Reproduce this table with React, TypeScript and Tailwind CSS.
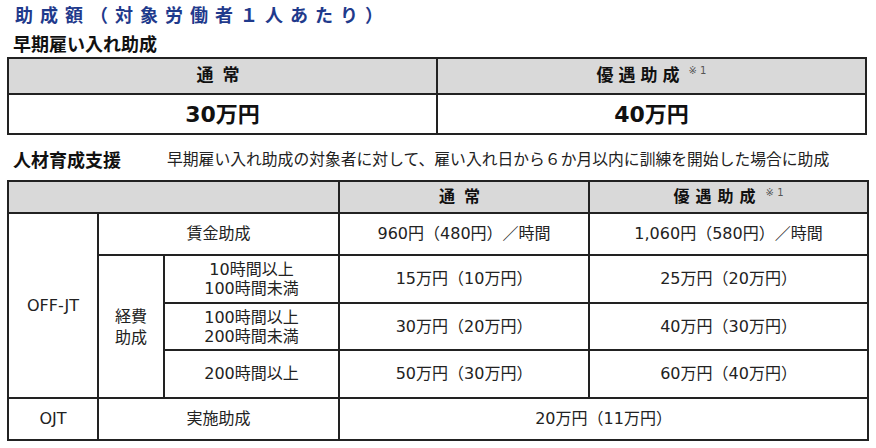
const font = { fontFamily: '"DejaVu Sans", "Noto Sans CJK JP", "Noto Sans", sans-serif' };
const cjk = { fontFamily: '"Noto Sans CJK JP", "Noto Sans", sans-serif' };

function Note() {
  return (
    <span className="ml-1 align-top text-[10px] font-normal tracking-normal text-[#555]">
      ※ 1
    </span>
  );
}

const cell = "border-2 border-[#222] text-center align-middle p-0";

export default function App() {
  return (
    <div
      className="w-[876px] h-[448px] bg-white text-[#111] px-[7px] overflow-hidden"
      style={font}
    >
      {/* title */}
      <div className="h-[28px] flex items-center pl-[8px]" style={cjk}>
        <h1 className="text-[18px] font-bold tracking-[7px] text-[#1f3a8c] leading-none">
          助成額（対象労働者１人あたり）
        </h1>
      </div>
      <div className="h-[29px] flex items-center pl-[6px]" style={cjk}>
        <h2 className="text-[18px] font-bold leading-none">早期雇い入れ助成</h2>
      </div>

      {/* early hire table */}
      <table className="w-[860px] table-fixed border-collapse">
        <tbody>
          <tr className="h-[36px] bg-[#d9d9d9]">
            <td className={`${cell} text-[17px] font-bold tracking-[9px]`}>通常</td>
            <td className={`${cell} text-[17px] font-bold tracking-[5px]`}>
              優遇助成
              <Note />
            </td>
          </tr>
          <tr className="h-[40px]">
            <td className={`${cell} text-[22px] font-bold`}>30万円</td>
            <td className={`${cell} text-[22px] font-bold`}>40万円</td>
          </tr>
        </tbody>
      </table>

      {/* training support */}
      <div className="h-[45px] flex items-center gap-[46px] pl-[6px] pt-[2px]" style={cjk}>
        <h2 className="text-[18px] font-bold leading-none">人材育成支援</h2>
        <p className="text-[15.8px] leading-none text-[#222]">
          早期雇い入れ助成の対象者に対して、雇い入れ日から６か月以内に訓練を開始した場合に助成
        </p>
      </div>

      <table className="w-[860px] table-fixed border-collapse text-[16px] text-[#222]">
        <colgroup>
          <col className="w-[90px]" />
          <col className="w-[66px]" />
          <col className="w-[175px]" />
          <col className="w-[250px]" />
          <col className="w-[279px]" />
        </colgroup>
        <tbody>
          <tr className="h-[32px] bg-[#d9d9d9] text-[16px] font-bold text-[#111]">
            <td colSpan={3} className={cell}></td>
            <td className={`${cell} tracking-[9px]`}>通常</td>
            <td className={`${cell} tracking-[6px]`}>
              優遇助成
              <Note />
            </td>
          </tr>
          <tr className="h-[42px]">
            <td rowSpan={4} className={cell}>OFF-JT</td>
            <td colSpan={2} className={cell}>賃金助成</td>
            <td className={cell}>960円（480円）／時間</td>
            <td className={cell}>1,060円（580円）／時間</td>
          </tr>
          <tr className="h-[48px]">
            <td rowSpan={3} className={`${cell} leading-[21px]`}>
              経費
              <br />
              助成
            </td>
            <td className={`${cell} leading-[19px]`}>
              10時間以上
              <br />
              100時間未満
            </td>
            <td className={cell}>15万円（10万円）</td>
            <td className={cell}>25万円（20万円）</td>
          </tr>
          <tr className="h-[47px]">
            <td className={`${cell} leading-[19px]`}>
              100時間以上
              <br />
              200時間未満
            </td>
            <td className={cell}>30万円（20万円）</td>
            <td className={cell}>40万円（30万円）</td>
          </tr>
          <tr className="h-[48px]">
            <td className={cell}>200時間以上</td>
            <td className={cell}>50万円（30万円）</td>
            <td className={cell}>60万円（40万円）</td>
          </tr>
          <tr className="h-[42px]">
            <td className={cell}>OJT</td>
            <td colSpan={2} className={cell}>実施助成</td>
            <td colSpan={2} className={cell}>20万円（11万円）</td>
          </tr>
        </tbody>
      </table>
    </div>
  );
}
